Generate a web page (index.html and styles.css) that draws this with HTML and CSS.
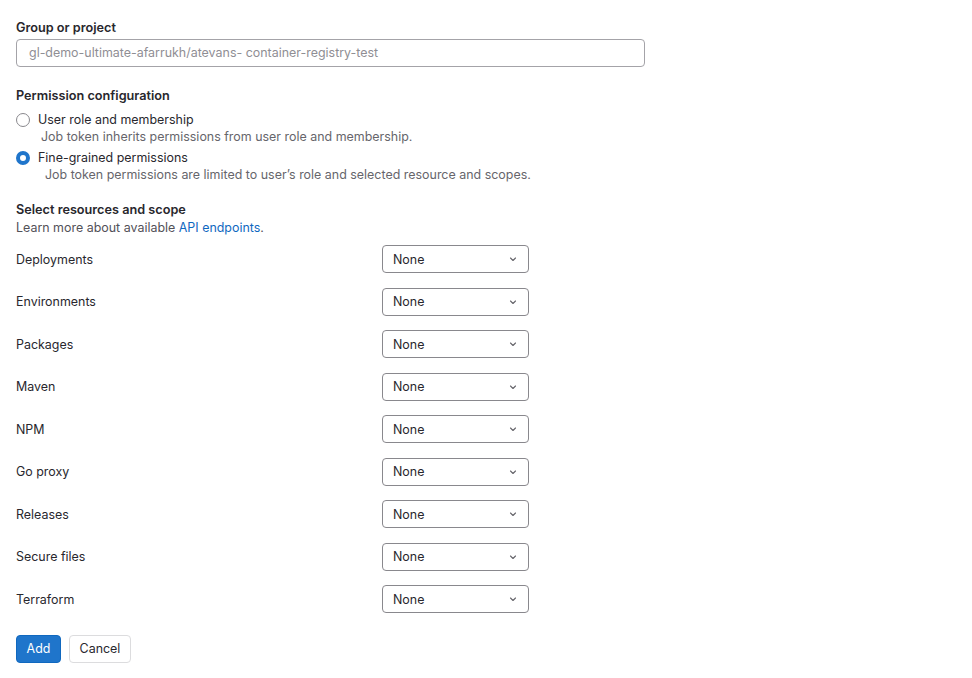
FILE: index.html
```html
<!DOCTYPE html>
<html>
<head>
<meta charset="utf-8">
<link rel="stylesheet" href="styles.css">
</head>
<body>
<form class="form">
  <div class="field">
    <label class="label">Group or project</label>
    <div class="input">gl-demo-ultimate-afarrukh/atevans- container-registry-test</div>
  </div>

  <div class="field perm">
    <div class="label">Permission configuration</div>
    <div class="radio-item first">
      <span class="radio"></span>
      <span class="radio-label">User role and membership</span>
    </div>
    <div class="help help-1">Job token inherits permissions from user role and membership.</div>
    <div class="radio-item second">
      <span class="radio checked"></span>
      <span class="radio-label">Fine-grained permissions</span>
    </div>
    <div class="help help-2">Job token permissions are limited to user’s role and selected resource and scopes.</div>
  </div>

  <div class="field scope">
    <div class="label">Select resources and scope</div>
    <div class="learn">Learn more about available <a class="link">API endpoints</a>.</div>
  </div>

  <div class="rows">
    <div class="row"><span class="row-name">Deployments</span><div class="select"><span>None</span><svg class="chev" viewBox="0 0 16 16"><path d="M5.5 7l2.5 2.5 2.5-2.5"/></svg></div></div>
    <div class="row"><span class="row-name">Environments</span><div class="select"><span>None</span><svg class="chev" viewBox="0 0 16 16"><path d="M5.5 7l2.5 2.5 2.5-2.5"/></svg></div></div>
    <div class="row"><span class="row-name">Packages</span><div class="select"><span>None</span><svg class="chev" viewBox="0 0 16 16"><path d="M5.5 7l2.5 2.5 2.5-2.5"/></svg></div></div>
    <div class="row"><span class="row-name">Maven</span><div class="select"><span>None</span><svg class="chev" viewBox="0 0 16 16"><path d="M5.5 7l2.5 2.5 2.5-2.5"/></svg></div></div>
    <div class="row"><span class="row-name">NPM</span><div class="select"><span>None</span><svg class="chev" viewBox="0 0 16 16"><path d="M5.5 7l2.5 2.5 2.5-2.5"/></svg></div></div>
    <div class="row"><span class="row-name">Go proxy</span><div class="select"><span>None</span><svg class="chev" viewBox="0 0 16 16"><path d="M5.5 7l2.5 2.5 2.5-2.5"/></svg></div></div>
    <div class="row"><span class="row-name">Releases</span><div class="select"><span>None</span><svg class="chev" viewBox="0 0 16 16"><path d="M5.5 7l2.5 2.5 2.5-2.5"/></svg></div></div>
    <div class="row"><span class="row-name">Secure files</span><div class="select"><span>None</span><svg class="chev" viewBox="0 0 16 16"><path d="M5.5 7l2.5 2.5 2.5-2.5"/></svg></div></div>
    <div class="row"><span class="row-name">Terraform</span><div class="select"><span>None</span><svg class="chev" viewBox="0 0 16 16"><path d="M5.5 7l2.5 2.5 2.5-2.5"/></svg></div></div>
  </div>

  <div class="actions">
    <button type="button" class="btn btn-primary">Add</button>
    <button type="button" class="btn btn-default">Cancel</button>
  </div>
</form>
</body>
</html>
```

FILE: styles.css
```css
html, body {
  margin: 0;
  padding: 0;
  background: #fff;
}
body {
  font-family: Inter, "Noto Sans", sans-serif;
  font-size: 12.45px;
  color: #2f2f33;
}
.form {
  padding: 19px 16px 16px 16px;
}
.label {
  display: block;
  font-weight: 600;
  font-size: 12.7px;
  line-height: 18px;
  color: #28272d;
}
.input {
  margin-top: 2px;
  width: 629px;
  height: 28px;
  box-sizing: border-box;
  border: 1px solid #a4a3a8;
  border-radius: 4px;
  padding: 0 12px;
  line-height: 26px;
  color: #8f8e94;
}
.perm {
  margin-top: 20px;
}
.radio-item {
  display: flex;
  align-items: center;
  gap: 8px;
  height: 18px;
}
.radio-item.first { margin-top: 6px; }
.radio-item.second { margin-top: 4px; }
.radio {
  width: 14px;
  height: 14px;
  box-sizing: border-box;
  border: 1px solid #89888d;
  border-radius: 50%;
  background: #fff;
}
.radio.checked {
  border: 4px solid #1f75cb;
  background: #fff;
}
.radio-label {
  color: #28272d;
  line-height: 18px;
}
.help {
  color: #66656b;
  line-height: 17px;
  margin-top: -1px;
}
.help-1 { padding-left: 25px; }
.help-2 { padding-left: 29px; }
.scope {
  margin-top: 18px;
}
.learn {
  color: #535158;
  line-height: 18px;
}
.link {
  color: #1068bf;
}
.rows {
  margin-top: 8px;
  display: flex;
  flex-direction: column;
  gap: 14.5px;
}
.row {
  display: flex;
  align-items: center;
  height: 28px;
}
.row-name {
  width: 366px;
  color: #28272d;
}
.select {
  width: 147px;
  height: 28px;
  box-sizing: border-box;
  border: 1px solid #89888d;
  border-radius: 4px;
  display: flex;
  align-items: center;
  justify-content: space-between;
  padding: 0 7px 0 10px;
  color: #28272d;
}
.chev {
  width: 16px;
  height: 16px;
  fill: none;
  stroke: #66656b;
  stroke-width: 1.1;
  stroke-linecap: round;
  stroke-linejoin: round;
}
.actions {
  margin-top: 21.5px;
  display: flex;
  gap: 8px;
}
.btn {
  height: 28px;
  font-family: inherit;
  font-size: 12.45px;
  border-radius: 4px;
  padding: 0;
  cursor: pointer;
}
.btn-primary {
  background: #1f75cb;
  border: 1px solid #1068bf;
  color: #fff;
  width: 45px;
}
.btn-default {
  background: #fff;
  border: 1px solid #dcdcde;
  color: #28272d;
  width: 62px;
}
```
